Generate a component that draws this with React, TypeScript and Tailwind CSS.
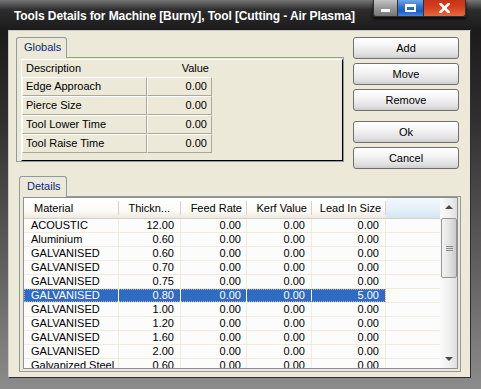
import React from "react"

// Globals grid rows
const globals = [
  ["Edge Approach", "0.00"],
  ["Pierce Size", "0.00"],
  ["Tool Lower Time", "0.00"],
  ["Tool Raise Time", "0.00"],
]

// Details grid rows: material, thickness, feed rate, kerf, lead in
const details = [
  ["ACOUSTIC", "12.00", "0.00", "0.00", "0.00"],
  ["Aluminium", "0.60", "0.00", "0.00", "0.00"],
  ["GALVANISED", "0.60", "0.00", "0.00", "0.00"],
  ["GALVANISED", "0.70", "0.00", "0.00", "0.00"],
  ["GALVANISED", "0.75", "0.00", "0.00", "0.00"],
  ["GALVANISED", "0.80", "0.00", "0.00", "5.00"],
  ["GALVANISED", "1.00", "0.00", "0.00", "0.00"],
  ["GALVANISED", "1.20", "0.00", "0.00", "0.00"],
  ["GALVANISED", "1.60", "0.00", "0.00", "0.00"],
  ["GALVANISED", "2.00", "0.00", "0.00", "0.00"],
  ["Galvanized Steel", "0.60", "0.00", "0.00", "0.00"],
]

const selectedRow = 5

const cols = [
  { label: "Material", w: "w-[95px]", head: "justify-start pl-[10px]", cell: "justify-start pl-[7px]" },
  { label: "Thickn...", w: "w-[62px]", head: "justify-end pr-[11px]", cell: "justify-end pr-[6px]" },
  { label: "Feed Rate", w: "w-[66px]", head: "justify-end pr-[5px]", cell: "justify-end pr-[5px]" },
  { label: "Kerf Value", w: "w-[65px]", head: "justify-end pr-[5px]", cell: "justify-end pr-[6px]" },
  { label: "Lead In Size", w: "w-[74px]", head: "justify-end pr-[5px]", cell: "justify-end pr-[6px]" },
]

function Tab({ label, w }: { label: string; w: string }) {
  return (
    <div
      className={`relative z-10 -mb-px flex h-[21px] ${w} items-center rounded-t-[3px] border border-b-0 border-[#919b9c] bg-[#ece9d8] pb-[1px] pl-[7px] text-[#0c2a7a]`}
    >
      {label}
    </div>
  )
}

function Btn({ children, className = "" }: { children: React.ReactNode; className?: string }) {
  return (
    <div
      className={`flex h-[22px] w-[106px] items-center justify-center rounded-[3px] border border-[#6f6f6f] bg-[linear-gradient(to_bottom,#ffffff,#f3f3f3_40%,#e1e1e1_80%,#cdcdcd)] ${className}`}
    >
      {children}
    </div>
  )
}

function TitleButtons() {
  return (
    <div className="absolute right-[15px] top-0 flex shadow-[0_2px_3px_rgba(0,0,0,0.7)]">
      {/* minimize */}
      <div className="flex h-[17px] w-[25px] items-end justify-center rounded-bl-[3px] border border-t-0 border-[#303030] bg-[linear-gradient(to_bottom,#c4c4c4,#9a9a9a_45%,#767676)] pb-[4px]">
        <div className="h-[3px] w-[9px] bg-white" />
      </div>
      {/* maximize */}
      <div className="flex h-[17px] w-[26px] items-center justify-center border border-l-0 border-t-0 border-[#303030] bg-[linear-gradient(to_bottom,#6aa8ee,#2a70d0_45%,#1c5cc0_70%,#3e8ae6)] pb-[1px]">
        <div className="h-[8px] w-[11px] border-2 border-t-[3px] border-white" />
      </div>
      {/* close */}
      <div className="flex h-[17px] w-[42px] items-center justify-center rounded-br-[3px] border border-l-0 border-t-0 border-[#303030] bg-[linear-gradient(to_bottom,#c4341a,#d43c1c_40%,#e8683c)] pb-[1px]">
        <svg width="11" height="10" viewBox="0 0 11 10">
          <path d="M1.5 1 L9.5 9 M9.5 1 L1.5 9" stroke="white" strokeWidth="2.6" strokeLinecap="square" />
        </svg>
      </div>
    </div>
  )
}

function Scrollbar() {
  return (
    <div className="flex h-full w-[17px] flex-col bg-[linear-gradient(to_right,#fbfbfb,#efefef_55%,#dedede)]">
      <div className="flex h-[20px] items-center justify-center pb-[3px]">
        <div className="h-0 w-0 border-x-[4px] border-b-[4px] border-x-transparent border-b-[#4a4a4a]" />
      </div>
      <div className="ml-[1px] flex h-[60px] w-[16px] flex-col items-center justify-center gap-[1px] rounded-[2px] border border-[#959595] bg-[linear-gradient(to_right,#f4f4f4,#e3e3e3_50%,#cbcbcb)]">
        <div className="h-px w-[7px] bg-[#8a8a8a]" />
        <div className="h-px w-[7px] bg-[#8a8a8a]" />
        <div className="h-px w-[7px] bg-[#8a8a8a]" />
      </div>
      <div className="flex-1" />
      <div className="flex h-[18px] items-center justify-center">
        <div className="h-0 w-0 border-x-[4px] border-t-[4px] border-x-transparent border-t-[#4a4a4a]" />
      </div>
    </div>
  )
}

export default function App() {
  return (
    <div className="relative flex h-[389px] w-[481px] flex-col overflow-hidden bg-[linear-gradient(to_bottom,#767676_0px,#2c2c2c_10px,#1b1b1b_30px,#303030_120px,#5e5e5e_260px,#8c8c8c_389px)] font-['Liberation_Sans',Arial,sans-serif] text-[11px] leading-[13px] text-black">
      {/* Title bar */}
      <div className="h-[30px] shrink-0 pl-[14px] pt-[9px] text-[12px] font-bold leading-[14px] tracking-[-0.1px] text-white">
        Tools Details for Machine [Burny], Tool [Cutting - Air Plasma]
      </div>
      <TitleButtons />

      {/* Client area */}
      <div className="ml-[8px] h-[348px] w-[463px] shrink-0 border border-b-[#2e2e2e] border-l-[#c8c8c8] border-r-[#2e2e2e] border-t-[#c8c8c8] bg-[#ece9d8] pt-[6px]">
        {/* Top: globals + buttons */}
        <div className="flex">
          <div className="ml-[7px] flex w-[328px] flex-col">
            <Tab label="Globals" w="w-[51px]" />
            <div className="h-[105px] border border-[#919b9c] pl-[4px] pt-[1px]">
              <div className="h-[102px] w-[322px] border border-b-black border-l-white border-r-black border-t-white">
                <div className="flex h-[17px] w-[190px] items-center">
                  <div className="w-[125px] pl-[4px]">Description</div>
                  <div className="w-[65px] pr-[3px] text-right">Value</div>
                </div>
                {globals.map(([name, val]) => (
                  <div key={name} className="flex h-[19px] w-[190px]">
                    <div className="flex w-[125px] items-center border border-b-[#aca899] border-l-white border-r-[#aca899] border-t-white pl-[3px]">
                      {name}
                    </div>
                    <div className="flex w-[65px] items-center justify-end border border-b-[#aca899] border-l-white border-r-[#aca899] border-t-white pr-[4px]">
                      {val}
                    </div>
                  </div>
                ))}
              </div>
            </div>
          </div>

          <div className="ml-[9px] flex flex-col">
            <Btn>Add</Btn>
            <Btn className="mt-[4px]">Move</Btn>
            <Btn className="mt-[4px]">Remove</Btn>
            <Btn className="mt-[10px]">Ok</Btn>
            <Btn className="mt-[4px]">Cancel</Btn>
          </div>
        </div>

        {/* Details */}
        <div className="ml-[10px] mt-[7px] flex w-[442px] flex-col">
          <Tab label="Details" w="w-[48px]" />
          <div className="h-[176px] border border-[#919b9c] pb-[2px] pl-[3px] pr-[2px]">
            <div className="flex h-[172px] w-[435px] overflow-hidden border border-[#8f8f8f] bg-[#fcfcfc]">
              <div className="flex w-[416px] flex-col overflow-hidden">
                {/* Header */}
                <div className="flex h-[21px] shrink-0 border-b border-[#d5d2c5] bg-[linear-gradient(to_bottom,#ffffff,#fbfaf6_65%,#ebe9df)]">
                  {cols.map((c) => (
                    <div key={c.label} className={`relative flex ${c.w} items-center ${c.head}`}>
                      {c.label}
                      <div className="absolute right-0 top-[3px] h-[14px] w-px bg-[#d6d3c6]" />
                    </div>
                  ))}
                  <div className="flex-1 bg-[linear-gradient(to_bottom,#f3f8fc,#e4eff8_60%,#d3e5f3)]" />
                </div>
                {/* Rows */}
                {details.map((r, i) => {
                  const sel = i === selectedRow
                  return (
                    <div key={i} className="flex h-[14px] shrink-0 border-b border-[#efebdd]">
                      <div
                        className={`flex ${
                          sel ? "bg-[#316ac5] text-white outline-1 -outline-offset-1 outline-dotted outline-[#eea23c]" : ""
                        }`}
                      >
                        {r.map((v, j) => (
                          <div
                            key={j}
                            className={`flex ${cols[j].w} items-center border-r ${cols[j].cell} ${
                              sel ? "border-white" : "border-[#efebdd]"
                            }`}
                          >
                            {v}
                          </div>
                        ))}
                      </div>
                      <div className="flex-1" />
                    </div>
                  )
                })}
              </div>
              <Scrollbar />
            </div>
          </div>
        </div>
      </div>
    </div>
  )
}
